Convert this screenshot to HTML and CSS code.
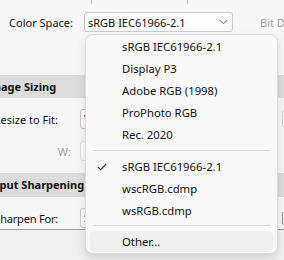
FILE: index.html
```
<!DOCTYPE html>
<html>
<head>
<meta charset="utf-8">
<link rel="stylesheet" href="styles.css">
</head>
<body>
<div class="page">
  <div class="stub"><span class="tick tick-a"></span><span class="tick tick-b"></span></div>
  <div class="cs-row">
    <span class="cs-label">Color Space:</span>
    <div class="cs-select">
      <span class="cs-value">sRGB IEC61966-2.1</span>
      <svg class="chev" width="9" height="6" viewBox="0 0 9 6"><path d="M0.5 0.8 L4.5 4.8 L8.5 0.8" fill="none" stroke="#5a5a5a" stroke-width="1"/></svg>
    </div>
    <span class="cs-bit">Bit Depth:</span>
  </div>

  <section class="panel">
    <div class="sechead sechead-size">Image Sizing</div>
    <div class="frow">
      <span class="lbl">Resize to Fit:</span>
      <div class="ctl">W</div>
      <div class="ctl2"></div>
    </div>
    <div class="frow">
      <span class="lbl lbl-sub">W:</span>
      <div class="ctl ctl-dis"></div>
    </div>
    <div class="sechead sechead-sharp">Output Sharpening</div>
    <div class="frow">
      <span class="lbl lbl-sharp">Sharpen For:</span>
      <div class="ctl">S</div>
      <div class="chk"></div>
    </div>
  </section>
  <div class="below"></div>

  <div class="menu">
    <div class="item">sRGB IEC61966-2.1</div>
    <div class="item">Display P3</div>
    <div class="item">Adobe RGB (1998)</div>
    <div class="item">ProPhoto RGB</div>
    <div class="item">Rec. 2020</div>
    <div class="sep"></div>
    <div class="item item-checked">
      <svg class="check" width="10" height="8" viewBox="0 0 10 8"><path d="M0.8 3.8 L3.6 6.6 L9.2 1" fill="none" stroke="#3a3a3a" stroke-width="1.1"/></svg>
      sRGB IEC61966-2.1
    </div>
    <div class="item">wscRGB.cdmp</div>
    <div class="item">wsRGB.cdmp</div>
    <div class="sep sep-b"></div>
    <div class="item item-hover">Other...</div>
  </div>
</div>
</body>
</html>
```

FILE: styles.css
```
html, body {
  margin: 0;
  padding: 0;
  width: 284px;
  height: 260px;
  overflow: hidden;
  background: #f7f7f7;
}
.page {
  position: relative;
  width: 284px;
  height: 260px;
  font-family: "Noto Sans", "Open Sans", sans-serif;
  font-size: 11px;
  color: #111111;
}
.stub {
  height: 4px;
  display: flex;
}
.tick {
  width: 1px;
  height: 4px;
  background: #c4c4c4;
  flex: none;
}
.tick-a { margin-left: 91px; }
.tick-b { margin-left: 95px; }

.cs-row {
  margin-top: 8px;
  height: 20px;
  display: flex;
  align-items: center;
}
.cs-label {
  width: 73px;
  text-align: right;
  white-space: nowrap;
  flex: none;
}
.cs-select {
  margin-left: 11px;
  width: 144px;
  height: 18px;
  border: 1px solid #c9c9c9;
  border-radius: 3px;
  background: #fdfdfd;
  display: flex;
  align-items: center;
  padding-left: 3px;
  white-space: nowrap;
  flex: none;
}
.cs-value { flex: 1; }
.chev { margin-right: 4px; flex: none; }
.cs-bit {
  margin-left: 27px;
  color: #a3a3a3;
  white-space: nowrap;
  flex: none;
}

.panel {
  margin: 43px 0 0 -40px;
  width: 400px;
  padding-bottom: 1px;
  border-bottom: 1px solid #9c9c9c;
}
.sechead {
  height: 23px;
  line-height: 23px;
  background: #dcdcdc;
  font-weight: bold;
  white-space: nowrap;
}
.sechead-size { padding-left: 26px; }
.sechead-sharp { margin-top: 12px; height: 24px; line-height: 24px; padding-left: 19px; }
.frow {
  margin-top: 11px;
  height: 20px;
  display: flex;
  align-items: center;
}
.frow + .frow { margin-top: 12px; }
.lbl {
  width: 98px;
  text-align: right;
  white-space: nowrap;
  flex: none;
}
.lbl-sharp { letter-spacing: -0.2px; }
.lbl-sub {
  width: 111px;
  color: #a0a0a0;
}
.ctl {
  margin-left: 22px;
  width: 136px;
  height: 18px;
  line-height: 18px;
  border: 1px solid #c9c9c9;
  border-radius: 3px;
  background: #fdfdfd;
  padding-left: 3px;
  flex: none;
  white-space: nowrap;
}
.lbl-sub + .ctl { margin-left: 9px; border-color: #dedede; }
.ctl2 {
  margin-left: 61px;
  width: 60px;
  height: 16px;
  border: 1px solid #c9c9c9;
  border-radius: 3px;
  background: #fdfdfd;
  flex: none;
}
.chk {
  margin-left: 61px;
  width: 11px;
  height: 11px;
  border: 1px solid #8a8a8a;
  border-radius: 2px;
  flex: none;
}
.below {
  height: 40px;
  background: #f0f0f0;
}

.menu {
  position: absolute;
  left: 85px;
  top: 34px;
  width: 191px;
  border: 1px solid #dedede;
  border-radius: 8px;
  background: #f9f9f9;
  box-shadow: 0 4px 10px rgba(0, 0, 0, 0.13);
  padding: 1px 0;
}
.item {
  height: 22px;
  line-height: 22px;
  padding-left: 36px;
  position: relative;
  white-space: nowrap;
  font-size: 11.3px;
}
.check {
  position: absolute;
  left: 11px;
  top: 7px;
}
.sep {
  height: 1px;
  background: #dcdcdc;
  margin: 4px 7px 5px 7px;
}
.sep-b { margin: 3px 7px 5px 7px; }
.item-hover {
  height: 21px;
  line-height: 21px;
  margin: 0 4px;
  padding-left: 32px;
  background: #efefef;
  border-radius: 5px;
}
```
